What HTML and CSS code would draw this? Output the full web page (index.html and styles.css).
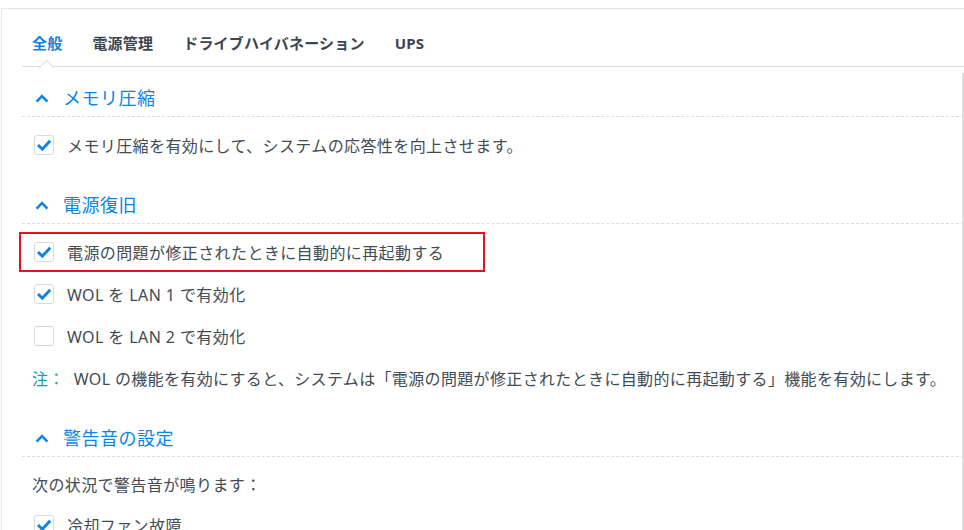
FILE: index.html
```html
<!DOCTYPE html>
<html>
<head>
    <meta charset="UTF-8">
    <title>全般</title>
    <link rel="stylesheet" href="styles.css">
</head>
<body>
<div class="panel">
    <ul class="tabs">
        <li class="on">全般</li>
        <li>電源管理</li>
        <li>ドライブハイバネーション</li>
        <li>UPS</li>
    </ul>

    <div class="section">
        <h3 class="title">
            <svg class="arrow" width="14" height="9" viewBox="0 0 14 9"><polyline points="1.6,7.6 7,2.2 12.4,7.6" fill="none" stroke="#0a84e6" stroke-width="2.6"/></svg>
            <span>メモリ圧縮</span>
        </h3>
        <div class="body">
            <label class="row">
                <i class="box"><svg width="20" height="20" viewBox="0 0 20 20"><polyline points="4,10 8.3,14.2 16.2,5.8" fill="none" stroke="#0a84e6" stroke-width="2.9"/></svg></i>
                <span>メモリ圧縮を有効にして、システムの応答性を向上させます。</span>
            </label>
        </div>
    </div>

    <div class="section">
        <h3 class="title">
            <svg class="arrow" width="14" height="9" viewBox="0 0 14 9"><polyline points="1.6,7.6 7,2.2 12.4,7.6" fill="none" stroke="#0a84e6" stroke-width="2.6"/></svg>
            <span>電源復旧</span>
        </h3>
        <div class="body">
            <label class="row marked">
                <i class="box"><svg width="20" height="20" viewBox="0 0 20 20"><polyline points="4,10 8.3,14.2 16.2,5.8" fill="none" stroke="#0a84e6" stroke-width="2.9"/></svg></i>
                <span>電源の問題が修正されたときに自動的に再起動する</span>
            </label>
            <label class="row">
                <i class="box"><svg width="20" height="20" viewBox="0 0 20 20"><polyline points="4,10 8.3,14.2 16.2,5.8" fill="none" stroke="#0a84e6" stroke-width="2.9"/></svg></i>
                <span>WOL を LAN 1 で有効化</span>
            </label>
            <label class="row">
                <i class="box"></i>
                <span>WOL を LAN 2 で有効化</span>
            </label>
            <p class="note"><em>注：</em>&nbsp;&nbsp;WOL の機能を有効にすると、システムは「電源の問題が修正されたときに自動的に再起動する」機能を有効にします。</p>
        </div>
    </div>

    <div class="section">
        <h3 class="title">
            <svg class="arrow" width="14" height="9" viewBox="0 0 14 9"><polyline points="1.6,7.6 7,2.2 12.4,7.6" fill="none" stroke="#0a84e6" stroke-width="2.6"/></svg>
            <span>警告音の設定</span>
        </h3>
        <div class="body">
            <p class="text">次の状況で警告音が鳴ります：</p>
            <label class="row">
                <i class="box"><svg width="20" height="20" viewBox="0 0 20 20"><polyline points="4,10 8.3,14.2 16.2,5.8" fill="none" stroke="#0a84e6" stroke-width="2.9"/></svg></i>
                <span>冷却ファン故障</span>
            </label>
        </div>
    </div>
</div>
<div class="scroll"></div>
</body>
</html>
```

FILE: styles.css
```css
* {
    margin: 0;
    padding: 0;
    font-family: "Noto Sans", "Noto Sans CJK JP", sans-serif;
}

html, body {
    height: 100%;
    overflow: hidden;
    background: #fff;
}

ul, li {
    list-style: none;
}

.panel {
    margin: 8px 0 0 1px;
    height: 100%;
    border-top: 1px solid #e0e6ec;
    border-left: 1px solid #e0e6ec;
    color: #414b55;
}

/* 选项卡 */
.tabs {
    display: flex;
    gap: 30px;
    margin-left: 20px;
    padding-left: 10px;
    border-bottom: 1px solid #d6dee5;
}

.tabs li {
    position: relative;
    padding: 22px 0 11px;
    line-height: 24px;
    font-size: 15px;
    font-weight: bold;
    letter-spacing: 0.2px;
    color: #3c4650;
}

.tabs li.on {
    color: #0a84e6;
}

.tabs li.on::after {
    content: "";
    position: absolute;
    left: calc(50% - 6px);
    bottom: -7px;
    width: 10px;
    height: 10px;
    background: #fff;
    border-top: 1px solid #d6dee5;
    border-left: 1px solid #d6dee5;
    transform: rotate(45deg);
}

/* 分组 */
.section {
    margin-left: 20px;
}

.title {
    display: flex;
    align-items: center;
    gap: 14px;
    padding: 18px 0 5px 13px;
    line-height: 26px;
    font-size: 18px;
    font-weight: normal;
    letter-spacing: 0.5px;
    color: #0a84e6;
    border-bottom: 1px dashed #d3dee8;
}

.title .arrow {
    display: block;
}

.body {
    padding: 7px 0 8px 10px;
}

.row {
    display: flex;
    align-items: center;
    gap: 13px;
    height: 42px;
    font-size: 16px;
    letter-spacing: 0.4px;
}

.row .box {
    display: block;
    box-sizing: border-box;
    width: 20px;
    height: 20px;
    margin-left: 2px;
    border: 1px solid #d3dce5;
    border-radius: 3px;
    background: #fff;
}

.row .box svg {
    display: block;
    margin: -1px;
}

.row.marked {
    box-sizing: border-box;
    width: 466px;
    height: 40px;
    margin: 1px 0 1px -13px;
    padding-left: 11px;
    border: 2px solid #e5141e;
}

.note, .text {
    display: flex;
    align-items: center;
    height: 42px;
    font-size: 16px;
    letter-spacing: 0.4px;
    white-space: nowrap;
}

.note {
    letter-spacing: 0.35px;
}

.text {
    height: 40px;
}

.note em {
    font-style: normal;
    color: #10a3a8;
}

.scroll {
    position: fixed;
    top: 73px;
    right: 0;
    bottom: 0;
    width: 2px;
    border-radius: 2px 2px 0 0;
    background: #dedede;
}
```
